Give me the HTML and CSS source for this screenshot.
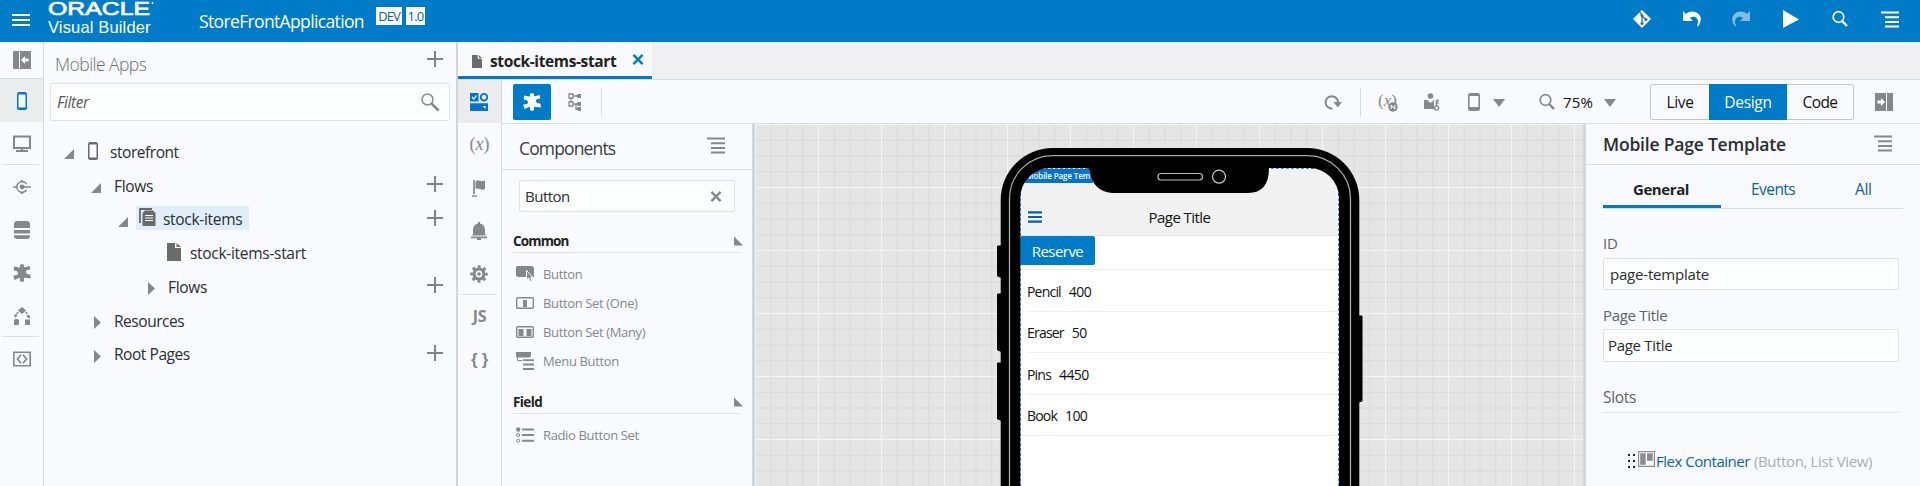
FILE: index.html
```html
<!DOCTYPE html>
<html lang="en">
<head>
<meta charset="utf-8">
<title>Oracle Visual Builder</title>
<link rel="stylesheet" href="styles.css">
</head>
<body>
<svg class="sprite" aria-hidden="true">
  <symbol id="menu" viewBox="0 0 18 18"><path d="M0 2.500h18M4 7.300h14M4 12h14M4 16.500h14" stroke="currentColor" stroke-width="2"/></symbol>
  <symbol id="plus" viewBox="0 0 16 16"><path d="M8 0v16M0 8h16" stroke="currentColor" stroke-width="2"/></symbol>
  <symbol id="close" viewBox="0 0 12 12"><path d="M1 1l10 10M11 1L1 11" stroke="currentColor" stroke-width="2.600"/></symbol>
  <symbol id="glass" viewBox="0 0 18 18"><circle cx="7.500" cy="7" r="5.300" fill="none" stroke="currentColor" stroke-width="1.700"/><path d="M11 11l5 5" stroke="currentColor" stroke-width="2.400"/></symbol>
  <symbol id="phone" viewBox="0 0 18 20"><path d="M5.500 1h7l1.500 1.500v15L12.500 19h-7L4 17.500v-15z" fill="currentColor"/><path d="M5.500 3.500h7v13h-7z" fill="#f8fafd"/></symbol>
  <symbol id="open" viewBox="0 0 10 10"><path d="M10 0v10H0z" fill="currentColor"/></symbol>
  <symbol id="shut" viewBox="0 0 7 13"><path d="M0 0l7 6.500L0 13z" fill="currentColor"/></symbol>
  <symbol id="down" viewBox="0 0 12 8"><path d="M0 0h12L6 8z" fill="currentColor"/></symbol>
  <symbol id="page" viewBox="0 0 14 18"><path d="M0 0h8v5h6v13H0z" fill="currentColor"/><path d="M9.500 0L14 4H9.500z" fill="currentColor"/></symbol>
  <symbol id="puzzle" viewBox="0 0 18 18"><path d="M1 2.500L6 3.600Q8 3.500 7 2.200 6 .3 9 .2 12 .3 11 2.200 10.500 3.500 12 3.300L16.500 2 17.500 5.500Q12.500 5.500 13 8.200 13.500 11 17.500 10.500L17.800 14.500 12 13.800Q10 13.700 11 15.500 11.500 17.800 9 17.800 6.500 17.800 7 15.500 7.800 13.700 6 13.900L1.500 16 .2 11.500Q5.200 11.800 5 9 4.800 6.200.8 6.800z" fill="currentColor"/></symbol>
  <symbol id="svc" viewBox="0 0 18 18"><circle cx="9" cy="9" r="2.400" fill="currentColor"/><path d="M0 9h4M9 9h9M13.500 6a5.300 5.300 0 1 0 0 6" fill="none" stroke="currentColor" stroke-width="1.500"/><path d="M8 2h2v2H8zM8 14h2v2H8z" fill="currentColor"/></symbol>
  <symbol id="data" viewBox="0 0 18 18"><path d="M3 0h12l2 2v5H1V2zM1 9h16v3.500H1zM1 14.200h16V16l-2 2H3l-2-2z" fill="currentColor"/></symbol>
  <symbol id="proc" viewBox="0 0 18 18"><path d="M9 0l4 3.500L9 7 5 3.500zM1 13l1.500-1h2L6 13v5H1zM12 12.500h5V18h-5z" fill="currentColor"/><path d="M5 5L2.500 9.500M13 5l2.500 4.500" stroke="currentColor" stroke-width="1.700" stroke-dasharray="2.200 1.200"/><path d="M1 7.500h3.500L2 11zM13.500 8.500H17V11h-2z" fill="currentColor"/></symbol>
  <symbol id="monitor" viewBox="0 0 18 18"><path d="M1 1.500h16v11.500H1z" fill="none" stroke="currentColor" stroke-width="2"/><path d="M8 13h2v2h5v2H3v-2h5z" fill="currentColor"/></symbol>
  <symbol id="source" viewBox="0 0 18 18"><path d="M.8 2.300h16.400v13.400H.8z" fill="none" stroke="currentColor" stroke-width="1.600"/><path d="M8 4.800L4.500 9 8 13.200M10 4.800L13.500 9 10 13.200" fill="none" stroke="currentColor" stroke-width="1.700"/></symbol>
  <symbol id="pane" viewBox="0 0 18 18"><path d="M0 0h6v18H0zM7 0h11v18H7z" fill="currentColor"/><path d="M8 9l4-4v2.500h3.500v3H12V13z" fill="#fff"/></symbol>
  <symbol id="gear" viewBox="0 0 18 18"><circle cx="9" cy="9" r="5" fill="none" stroke="currentColor" stroke-width="3.200"/><circle cx="9" cy="9" r="7.500" fill="none" stroke="currentColor" stroke-width="2.600" stroke-dasharray="2.950 2.940" stroke-dashoffset="1.470"/><circle cx="9" cy="9" r="1.800" fill="currentColor"/></symbol>
  <symbol id="bell" viewBox="0 0 18 18"><path d="M8 0h2v1.500c3 .8 5 3 5 6V12l1 1.500H2L3 12V7.500c0-3 2-5.200 5-6zM1 14.500h16v1.700H1zM7 16h4v2H7z" fill="currentColor"/></symbol>
  <symbol id="flag" viewBox="0 0 18 18"><path d="M4 1v14M2 17h5" stroke="currentColor" stroke-width="1.700"/><path d="M5.500 3c3-3.500 5 1 9.500-1.500V10c-4 2-6-1.500-9.500 0z" fill="currentColor"/></symbol>
  <symbol id="widgets" viewBox="0 0 18 18"><path d="M0 0h8.500v8.500H0zM0 10.200h18V18H0z" fill="currentColor"/><circle cx="14" cy="4.200" r="3.300" fill="none" stroke="currentColor" stroke-width="1.800"/><path d="M2 4l1.800 2L6.500 2.500" fill="none" stroke="#fff" stroke-width="1.200"/><path d="M12.500 13h3v3z" fill="#fff"/></symbol>
  <symbol id="structure" viewBox="0 0 14 18"><path d="M1 1h4v4H1zM1 9h4v4H1zM3 5v4M5 3h5M5 11h5M8 11v5h3" fill="none" stroke="currentColor" stroke-width="1.300"/><path d="M8 3l2-2h3v4h-3zM8 11l2-2h3v4h-3zM8 16l2-2h3v4h-3z" fill="currentColor"/></symbol>
  <symbol id="undo" viewBox="0 0 18 18"><path d="M0 1l3 3c3-3.500 10-3.500 13.500 1 2.500 3.500 1 8-1.500 11.500l-1-1c1.500-3 1.500-5.500-.5-7.500S9 6.500 7 8l3 3H0z" fill="currentColor"/></symbol>
</svg>

<header class="top">
  <svg class="burger" viewBox="0 0 18 12"><path d="M0 1h18M0 6h18M0 11h18" stroke="#fff" stroke-width="2"/></svg>
  <div class="brand">
    <svg class="oracle" viewBox="0 0 108 16"><text x="0" y="14.300" textLength="102" lengthAdjust="spacingAndGlyphs">ORACLE</text><circle cx="104.500" cy="2" r="1"/></svg>
    <span class="product">Visual Builder</span>
  </div>
  <span class="appname">StoreFrontApplication</span>
  <span class="tag">DEV</span><span class="tag ver">1.0</span>
  <div class="top-actions">
    <svg class="ic" viewBox="0 0 18 18"><path d="M9 0l9 9-9 9-9-9z" fill="#fff"/><path d="M7 2.500l2 2.500v8.500M9 6l4 3.500" stroke="#2a6da8" stroke-width="1.300" fill="none"/><circle cx="9" cy="13.500" r="1.600" fill="#2a6da8"/><circle cx="9" cy="5.500" r="1.500" fill="#2a6da8"/><circle cx="13" cy="9.500" r="1.500" fill="#2a6da8"/></svg>
    <svg class="ic"><use href="#undo"/></svg>
    <svg class="ic redo"><use href="#undo"/></svg>
    <svg class="ic" viewBox="0 0 18 18"><path d="M1 0l16 9.500L1 18z" fill="#fff"/></svg>
    <svg class="ic"><use href="#glass"/></svg>
    <svg class="ic"><use href="#menu"/></svg>
  </div>
</header>

<div class="shell">
  <nav class="rail">
    <div class="cell first"><svg class="ic"><use href="#pane"/></svg></div>
    <div class="cell on"><svg class="ic tall"><use href="#phone"/></svg></div>
    <div class="cell"><svg class="ic"><use href="#monitor"/></svg></div>
    <hr>
    <div class="cell"><svg class="ic"><use href="#svc"/></svg></div>
    <div class="cell"><svg class="ic"><use href="#data"/></svg></div>
    <div class="cell"><svg class="ic"><use href="#puzzle"/></svg></div>
    <div class="cell"><svg class="ic"><use href="#proc"/></svg></div>
    <hr>
    <div class="cell"><svg class="ic"><use href="#source"/></svg></div>
  </nav>

  <aside class="navigator">
    <div class="nav-head"><h2>Mobile Apps</h2><svg class="plus"><use href="#plus"/></svg></div>
    <div class="filter"><span>Filter</span>
      <svg viewBox="0 0 18 18"><circle cx="6.500" cy="6.500" r="5.500" fill="none" stroke="#8a8c8e" stroke-width="1.500"/><path d="M10.500 10.500l7 7" stroke="#8a8c8e" stroke-width="2.600"/></svg></div>
    <ul class="tree">
      <li class="l1"><svg class="open"><use href="#open"/></svg><svg class="dev"><use href="#phone"/></svg><span class="root">storefront</span></li>
      <li class="l2"><svg class="open"><use href="#open"/></svg><span>Flows</span><svg class="plus"><use href="#plus"/></svg></li>
      <li class="l3"><svg class="open"><use href="#open"/></svg>
        <span class="picked"><svg viewBox="0 0 17 18"><path d="M1 15V1h12" fill="none" stroke="#686a6c" stroke-width="1.800"/><path d="M6 2.500h8l2.500 2.500v13h-13V5z" fill="#686a6c"/><path d="M6 7.500h8M6 10h8M6 12.500h8" stroke="#fff"/></svg>stock-items</span>
        <svg class="plus"><use href="#plus"/></svg></li>
      <li class="l4"><svg class="doc"><use href="#page"/></svg><span>stock-items-start</span></li>
      <li class="l4b"><svg class="shut"><use href="#shut"/></svg><span>Flows</span><svg class="plus"><use href="#plus"/></svg></li>
      <li class="l2b"><svg class="shut"><use href="#shut"/></svg><span>Resources</span></li>
      <li class="l2b"><svg class="shut"><use href="#shut"/></svg><span>Root Pages</span><svg class="plus"><use href="#plus"/></svg></li>
    </ul>
  </aside>

  <main class="work">
    <div class="tabs"><div class="tab"><svg class="doc"><use href="#page"/></svg><b>stock-items-start</b><svg class="x"><use href="#close"/></svg></div></div>
    <div class="editor">
      <nav class="rail sub">
        <div class="cell on"><svg class="ic"><use href="#widgets"/></svg></div>
        <div class="cell fx">(<i>x</i>)</div>
        <div class="cell"><svg class="ic"><use href="#flag"/></svg></div>
        <div class="cell"><svg class="ic"><use href="#bell"/></svg></div>
        <div class="cell"><svg class="ic"><use href="#gear"/></svg></div>
        <hr>
        <div class="cell js">JS</div>
        <div class="cell braces">{ }</div>
      </nav>
      <div class="stage">
        <div class="toolbar">
          <span class="tool-on"><svg class="ic"><use href="#puzzle"/></svg></span>
          <svg class="struct"><use href="#structure"/></svg>
          <span class="bar"></span>
          <svg class="refresh" viewBox="0 0 18 16"><path d="M8.500 14.500A6.200 6.200 0 1 1 14 8.500" fill="none" stroke="currentColor" stroke-width="2"/><path d="M9.500 8H18l-4.300 5.500z" fill="currentColor"/></svg>
          <span class="bar b2"></span>
          <span class="vars">(<i>x</i>)<svg viewBox="0 0 10 10"><circle cx="5" cy="5" r="4.700" fill="currentColor"/><path d="M3.200 7V3.200L6.800 7V3" fill="none" stroke="#fff"/></svg></span>
          <svg class="perm" viewBox="0 0 16 18"><circle cx="6.500" cy="3" r="2.800" fill="currentColor"/><path d="M0 7h3l3.500 3L10 7v9H0z" fill="currentColor"/><path d="M12.500 7v6M12 7.500h3M12.500 10h2" stroke="currentColor" stroke-width="1.500"/><circle cx="12.500" cy="15" r="2.100" fill="#f8fafd" stroke="currentColor" stroke-width="1.400"/></svg>
          <svg class="handset" viewBox="0 0 12 18"><rect x=".8" y=".8" width="10.400" height="16.400" rx="1.500" fill="none" stroke="currentColor" stroke-width="1.600"/><path d="M1 14h10v3H1zM1 1h10v2H1z" fill="currentColor"/></svg>
          <svg class="down"><use href="#down"/></svg>
          <svg class="ic zoom"><use href="#glass"/></svg>
          <span class="pct">75%</span>
          <svg class="down d2"><use href="#down"/></svg>
          <div class="modes"><span class="live">Live</span><span class="design">Design</span><span class="code">Code</span></div>
          <svg class="ic flip"><use href="#pane"/></svg>
        </div>
        <div class="panes">
          <section class="components">
            <div class="comp-head"><h2>Components</h2><svg class="ic"><use href="#menu"/></svg></div>
            <div class="comp-search"><span>Button</span><svg><use href="#close"/></svg></div>
            <h3>Common<svg viewBox="0 0 10 10"><path d="M0 0l10 10H0z" fill="currentColor"/></svg></h3>
            <ul>
              <li><svg viewBox="0 0 18 18"><path d="M1.500 1h15L18 2.500v9.500H1.500L0 10.500V2z" fill="currentColor"/><path d="M10.500 5.500V15l2.200-2 1.500 3.500 2-1-1.700-3H17z" fill="currentColor" stroke="#f8fafd"/></svg>Button</li>
              <li><svg viewBox="0 0 18 18"><rect x=".7" y="3.700" width="16.600" height="10.600" rx="1" fill="none" stroke="currentColor" stroke-width="1.400"/><path d="M7 6h4v7H7z" fill="currentColor"/></svg>Button Set (One)</li>
              <li><svg viewBox="0 0 18 18"><rect x=".7" y="3.700" width="16.600" height="10.600" rx="1" fill="none" stroke="currentColor" stroke-width="1.400"/><path d="M2.500 6h5v7h-5zM10.500 6h5v7h-5z" fill="currentColor"/></svg>Button Set (Many)</li>
              <li><svg viewBox="0 0 18 18"><path d="M0 0h15v4l-1 1.500H1L0 4.500zM7 7.200h11v1.900H7zM7 11.500h11v2H7zM7 16h11v2H7z" fill="currentColor"/><path d="M1.500 5v3.500H6" fill="none" stroke="currentColor" stroke-width="1"/></svg>Menu Button</li>
            </ul>
            <h3 class="field">Field<svg viewBox="0 0 10 10"><path d="M0 0l10 10H0z" fill="currentColor"/></svg></h3>
            <ul><li><svg viewBox="0 0 18 18"><circle cx="2.200" cy="3.500" r="2.200" fill="currentColor"/><circle cx="2.200" cy="9" r="1.500" fill="none" stroke="currentColor"/><circle cx="2.200" cy="14.700" r="1.500" fill="none" stroke="currentColor"/><path d="M6 3.500h12M6 9h12M6 14.700h12" stroke="currentColor" stroke-width="2"/></svg>Radio Button Set</li></ul>
          </section>

          <section class="canvas">
            <div class="device">
              <div class="screen">
                <div class="bar-top"><span class="sel">Mobile Page Tem</span>
                  <div class="title-row"><svg viewBox="0 0 14 12"><path d="M0 1.300h14M0 6h14M0 10.700h14" stroke="#0463a0" stroke-width="2.200"/></svg><span>Page Title</span></div></div>
                <div class="action"><span class="reserve">Reserve</span></div>
                <div class="item"><span>Pencil</span><span>400</span></div>
                <div class="item"><span>Eraser</span><span>50</span></div>
                <div class="item"><span>Pins</span><span>4450</span></div>
                <div class="item last"><span>Book</span><span>100</span></div>
              </div>
              <svg class="frame" viewBox="0 0 366 338">
                <path d="M6 98H0.500V128L6 130zM6 146H.5V202L6 204zM6 215H.5V271L6 273z" stroke="#000" stroke-linejoin="round"/>
                <path d="M359 168h6V253l-6 2z" stroke="#000" stroke-linejoin="round"/>
                <path fill-rule="evenodd" d="M3.700 340V52A52 52 0 0 1 55.700 0H310.300A52 52 0 0 1 362.300 52V340H342V50A30 30 0 0 0 312 20H272Q272 45 251 45H115Q96 43 93 24Q93 20 89 20H53A30 30 0 0 0 23.300 50V340z"/>
                <path d="M12.500 340V51A43 43 0 0 1 55.500 7.700H310.500A43 43 0 0 1 353.500 51V340" fill="none" stroke="#a8a8a8" stroke-width="1.300"/>
                <rect x="161" y="25.500" width="44.500" height="6.500" rx="3" fill="none" stroke="#bbb" stroke-width="1.200"/>
                <circle cx="222" cy="28.700" r="6.500" fill="none" stroke="#ccc" stroke-width="1.200"/>
              </svg>
            </div>
          </section>

          <section class="props">
            <div class="props-head"><h2>Mobile Page Template</h2><svg class="ic"><use href="#menu"/></svg></div>
            <div class="props-tabs"><b>General</b><span class="ev">Events</span><span class="all">All</span></div>
            <label>ID</label>
            <div class="input wide">page-template</div>
            <label class="second">Page Title</label>
            <div class="input">Page Title</div>
            <div class="slots">Slots</div>
            <div class="slot">
              <svg class="grip" viewBox="0 0 7 14"><path d="M0 0h2v2H0zM5 0h2v2H5zM0 6h2v2H0zM5 6h2v2H5zM0 12h2v2H0zM5 12h2v2H5z" fill="#222"/></svg>
              <svg class="flexic" viewBox="0 0 17 16"><path d="M.6.600h15.800v14.800H.6z" fill="#fff" stroke="#8a8c8e" stroke-width="1.200"/><path d="M2.200 2.200h5.500v11.600H2.200zM9 2.200h5.800v7.500H9z" fill="#8a8c8e"/></svg>
              <a>Flex Container</a><span>(Button, List View)</span>
            </div>
          </section>
        </div>
      </div>
    </div>
  </main>
</div>
</body>
</html>
```
FILE: styles.css
```css
* { box-sizing: border-box; }
body { margin: 0; width: 1920px; height: 486px; overflow: hidden; display: flex; flex-direction: column; background: #f8fafd; color: #2b2d30; font: 400 15.5px/20px "Open Sans", "Noto Sans", sans-serif; letter-spacing: -.3px; white-space: nowrap; }
h2, h3, ul { margin: 0; padding: 0; list-style: none; }
svg { display: block; flex: none; overflow: visible; }
.sprite { position: absolute; width: 0; height: 0; }
.ic { width: 18px; height: 18px; }
.ic.tall { height: 20px; }
.plus { width: 16px; height: 16px; color: #808285; }

/* Header */
.top { flex: none; height: 42px; display: flex; align-items: flex-start; background: #007bc8; color: #fff; padding-left: 12px; }
.burger { width: 18px; height: 12px; margin-top: 14px; }
.brand { width: 150px; margin-left: 18px; display: flex; flex-direction: column; }
.oracle { width: 108px; height: 16px; margin-top: 1px; fill: #fff; }
.oracle text { font: 400 18px "Liberation Sans", Arial, sans-serif; letter-spacing: 0; stroke: #fff; stroke-width: .7px; }
.product { font: 400 16.500px/18px "Liberation Sans", Arial, sans-serif; letter-spacing: .15px; margin-top: 1px; }
.appname { width: 177px; font-size: 17.500px; line-height: 24px; margin-top: 9px; margin-left: 1px; letter-spacing: -.64px; }
.tag { width: 26px; height: 18px; margin-top: 7px; background: #fff; color: #0463a0; font-size: 13px; line-height: 18px; text-align: center; letter-spacing: -1px; }
.ver { width: 19px; margin-left: 4px; letter-spacing: -.7px; }
.top-actions { display: flex; gap: 31.600px; margin: 10px 21px 0 auto; }
.redo { opacity: .5; transform: scaleX(-1); }

.shell { flex: 1; display: flex; min-height: 0; }

/* Icon rails */
.rail { flex: none; width: 44px; border-right: 1px solid #d3dde5; color: #85878a; }
.cell { height: 43px; display: flex; align-items: center; justify-content: center; }
.cell.first { height: 37px; border-bottom: 1px solid #d3dde5; }
.cell.on { background: #ebecee; color: #0572ce; }
.rail hr { border: 0; height: 1px; margin: -1px 4px 0 3px; background: #dcdfe2; }
.sub .ic { margin-right: 1px; }
.fx, .vars { font: 400 17px/20px "Liberation Serif", serif; letter-spacing: 0; }
.fx { font-size: 18px; padding-bottom: 2px; }
.js { font: 700 16px/20px "Open Sans", sans-serif; letter-spacing: -.3px; padding-bottom: 2px; }
.braces { font: 700 17px/20px "Liberation Sans", sans-serif; letter-spacing: -.3px; }

/* Navigator */
.navigator { flex: none; width: 414px; border-right: 2px solid #d3d5d9; }
.nav-head { height: 41px; display: flex; align-items: flex-start; justify-content: space-between; padding: 9px 13px 0 11px; color: #6c6e70; }
.nav-head h2 { font-size: 17.500px; font-weight: 350; line-height: 26px; letter-spacing: -.55px; }
.nav-head .plus { margin: 0 0 0 auto; }
.filter { height: 38px; margin: 0 6px; display: flex; align-items: center; justify-content: space-between; padding: 0 10px 0 6px; border: 1px solid #dfe2e5; border-radius: 2px; background: #fcfdfd; font-style: italic; color: #55585a; letter-spacing: -.4px; }
.filter svg { width: 18px; height: 18px; }
.tree { padding-top: 14.500px; }
.tree li { height: 33.660px; display: flex; align-items: center; padding-right: 13px; }
.tree .root { letter-spacing: -.45px; }
.tree .plus { margin: -3px 0 0 auto; }
.open { width: 10px; height: 10px; margin-top: 4px; color: #85878a; }
.shut { width: 7px; height: 13px; margin: 4px 13px 0 0; color: #85878a; }
.dev { width: 18px; height: 20px; margin: -3px 8px 0 10px; color: #686a6c; }
.doc { width: 14px; height: 18px; margin: -3px 9px 0 0; color: #6b6b6b; }
.l1 { padding-left: 20px; }
.l2 { padding-left: 47px; }
.l2 .open { margin-right: 13px; }
.l3 { padding-left: 74px; }
.l4 { padding-left: 123px; }
.l4b { padding-left: 104px; }
.l2b { padding-left: 50px; letter-spacing: -.45px; }
.picked { margin: -3px 0 0 8px; width: 113px; height: 24px; display: flex; align-items: center; padding: 2px 0 0 3px; background: #dfeef8; }
.picked svg { width: 17px; height: 18px; margin: -4px 7px 0 0; }

/* Editor */
.work { flex: 1; display: flex; flex-direction: column; min-width: 0; }
.tabs { flex: none; height: 38px; background: #f0f0f2; border-bottom: 1px solid #d3dde5; }
.tab { width: 194px; height: 37px; display: flex; align-items: center; padding: 4px 8px 0 13px; background: #f8fafd; border-bottom: 3px solid #007bc8; color: #222; letter-spacing: -.38px; }
.tab .doc { width: 10px; height: 13px; margin: 0 8px 0 1px; }
.tab .x { width: 12px; height: 11px; margin: -3px 0 0 auto; color: #007bc8; }
.editor { flex: 1; display: flex; min-height: 0; }
.stage { flex: 1; display: flex; flex-direction: column; min-width: 0; }
.toolbar { flex: none; height: 44px; display: flex; align-items: center; padding: 1px 0 0 11px; border-bottom: 1px solid #d3dde5; color: #85878a; }
.tool-on { width: 38px; height: 36px; display: flex; align-items: center; justify-content: center; background: #007bc8; border-radius: 2px; color: #fff; }
.struct { width: 14px; height: 18px; margin: 0 19px 0 17px; }
.bar { width: 1px; height: 29px; background: #d9dcdf; }
.refresh { width: 18px; height: 16px; margin-left: 722px; }
.b2 { margin-left: 18px; }
.vars { width: 20px; height: 20px; margin-left: 17px; position: relative; line-height: 17px; }
.vars svg { position: absolute; right: 0; bottom: 0; width: 10px; height: 10px; }
.perm { width: 16px; height: 18px; margin-left: 26px; }
.handset { width: 12px; height: 18px; margin-left: 28px; }
.down { width: 12px; height: 8px; margin: 2px 0 0 13px; }
.zoom { margin-left: 33px; }
.pct { width: 32px; margin-left: 7px; font-size: 15px; color: #111; letter-spacing: .2px; }
.d2 { margin-left: 9px; }
.modes { margin-left: 34px; width: 204px; height: 36px; display: flex; border: 1px solid #c4c8cb; border-radius: 2px; color: #111; line-height: 35px; text-align: center; }
.modes .live { width: 58px; }
.modes .design { width: 78px; margin: -1px 0; padding-top: 1px; background: #007bc8; color: #fff; }
.modes .code { flex: 1; letter-spacing: -.6px; }
.flip { margin-left: 21px; transform: scaleX(-1); }
.panes { flex: 1; display: flex; min-height: 0; }

/* Components */
.components { flex: none; width: 253px; border-right: 3px solid #d3d6d9; color: #85878a; }
.comp-head { height: 46px; padding: 2px 27px 0 17px; display: flex; align-items: center; justify-content: space-between; border-bottom: 1px solid #d9dde0; }
.comp-head h2 { font-size: 17.500px; font-weight: 400; color: #3a3c3f; letter-spacing: -.85px; }
.comp-head .ic { margin-top: -6px; }
.comp-search { margin: 10px 17px 17px; height: 32px; display: flex; align-items: center; justify-content: space-between; padding: 0 12px 0 5px; border: 1px solid #dfe2e5; border-radius: 2px; background: #fcfdfd; font-size: 15px; color: #2b2d30; letter-spacing: -.5px; }
.comp-search svg { width: 12px; height: 11px; color: #85878a; }
.components h3 { height: 24px; margin: 0 12px 6.500px 11px; display: flex; align-items: center; justify-content: space-between; border-bottom: 1px solid #dfe1e4; font-size: 13.500px; font-weight: 700; color: #222; letter-spacing: -.85px; }
.components h3 svg { width: 9px; height: 10px; margin-right: -3px; color: #85878a; }
.components h3.field { margin-top: 14.500px; letter-spacing: -.6px; }
.components li { height: 29px; display: flex; align-items: center; gap: 9px; padding-left: 14px; font-size: 13px; letter-spacing: -.36px; }
.components li svg { width: 18px; height: 18px; }

/* Canvas */
.canvas { flex: 1; overflow: hidden; padding: 24px 0 0 242px;
  background-color: #e5e5e5;
  background-image: linear-gradient(90deg, #f4f4f4 1px, transparent 1px), linear-gradient(#f4f4f4 1px, transparent 1px), linear-gradient(90deg, #d9d9d9 1px, transparent 1px), linear-gradient(#d9d9d9 1px, transparent 1px);
  background-size: 63px 63px, 63px 63px, 15.750px 15.750px, 15.750px 15.750px; }
.device { position: relative; width: 366px; height: 338px; padding: 20px 24px 0 23px; }
.frame { position: absolute; inset: 0; width: 366px; height: 338px; }
.screen { height: 318px; background: #fff; border: 1px dashed #3b93da; border-bottom: 0; border-width: 1px 1px 0; color: #111; }
.bar-top { height: 67px; background: #f1f1f2; border-bottom: 1px solid #e6e6e6; }
.sel { display: block; width: 72px; height: 14px; padding-left: 5px; background: #0572ce; color: #fff; font: 600 8px/14px "Open Sans", sans-serif; letter-spacing: -.1px; }
.title-row { display: grid; grid-template-columns: 14px 1fr 14px; align-items: center; padding: 0 7px; margin-top: 24px; font-size: 15px; text-align: center; letter-spacing: -.55px; }
.title-row svg { width: 14px; height: 12px; }
.action { height: 34px; border-bottom: 1px solid #eee; }
.reserve { display: block; width: 75px; height: 29px; margin-left: -1px; background: #007bc8; border-radius: 2px; color: #fff; font-size: 15px; line-height: 31px; text-align: center; letter-spacing: -.55px; }
.item { height: 41.500px; margin-left: 6px; padding-top: 3px; display: flex; align-items: center; gap: 8px; border-bottom: 1px solid #eee; font-size: 14px; letter-spacing: -.8px; }
.item span + span { letter-spacing: -.6px; }
.item.last { margin-left: 0; padding-left: 6px; }

/* Properties */
.props { flex: none; width: 337px; border-left: 3px solid #d3d9de; }
.props-head { height: 41px; padding: 0 28px 0 17px; display: flex; align-items: center; justify-content: space-between; border-bottom: 1px solid #dcdfe2; color: #85878a; }
.props-head .ic { margin-top: -3px; }
.props-head h2 { font-size: 17.500px; font-weight: 600; color: #2b2d30; letter-spacing: -.2px; }
.props-tabs { margin: 6px 17px 0; height: 38px; width: 300px; display: flex; line-height: 37px; border-bottom: 1px solid #d3dde5; color: #0b63a5; }
.props-tabs b { width: 118px; height: 37px; line-height: 37px; padding-right: 2px; border-bottom: 3px solid #007bc8; color: #222; text-align: center; letter-spacing: -.4px; font-size: 15px; }
.ev { margin-left: 30px; width: 104px; letter-spacing: -.55px; }
.all { letter-spacing: -.3px; }
.props label { display: block; margin: 24px 0 5px 17px; color: #5f6264; line-height: 20px; font-size: 15px; }
.props label.second { margin: 15px 0 4px 17px; }
.input { width: 296px; height: 33px; margin-left: 17px; padding-left: 4px; border: 1px solid #dfe2e5; border-radius: 2px; background: #fcfdfd; font-size: 15px; line-height: 31px; }
.input.wide { height: 32px; padding-left: 6px; letter-spacing: -.2px; }
.slots { margin: 25px 0 0 17px; width: 296px; height: 26px; border-bottom: 1px solid #dfe1e4; color: #5f6264; }
.slot { display: flex; align-items: center; margin: 38px 0 0 42px; font-size: 15px; }
.grip { width: 7px; height: 14px; margin-right: 3px; }
.flexic { width: 17px; height: 16px; margin: -5px 1px 0 0; }
.slot a { color: #0b63a5; width: 98px; letter-spacing: -.48px; }
.slot span { color: #abadaf; letter-spacing: -.38px; }
```
